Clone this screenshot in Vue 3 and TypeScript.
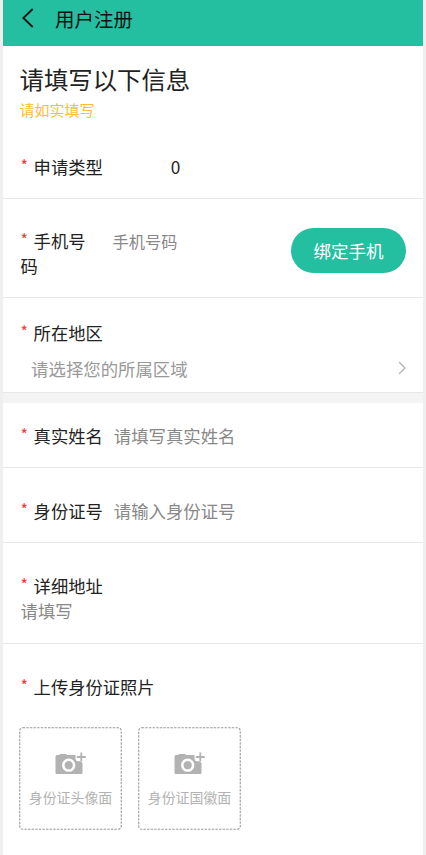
<script setup lang="ts">
interface UploadSlot {
  id: string
  caption: string
}

const uploads: UploadSlot[] = [
  { id: 'front', caption: '身份证头像面' },
  { id: 'back', caption: '身份证国徽面' },
]
</script>

<template>
  <div class="page">
    <header class="bar">
      <svg class="back" viewBox="0 0 12 20" width="12" height="20">
        <path d="M10.7 1 L1.3 10 L10.7 19" />
      </svg>
      <h1 class="bar-title">用户注册</h1>
    </header>

    <section class="intro">
      <h2 class="intro-title">请填写以下信息</h2>
      <p class="intro-tip">请如实填写</p>
    </section>

    <section class="row type">
      <div class="label"><span class="star">*</span>申请类型</div>
      <div class="type-value">0</div>
    </section>

    <section class="row phone">
      <div class="label phone-label"><span class="star">*</span>手机号码</div>
      <div class="hint phone-hint">手机号码</div>
      <button class="bind" type="button">绑定手机</button>
    </section>

    <section class="row region">
      <div class="label"><span class="star">*</span>所在地区</div>
      <div class="picker">
        <span class="hint picker-hint">请选择您的所属区域</span>
        <svg class="arrow" viewBox="0 0 8 14" width="8" height="14">
          <path d="M1 1 L7 7 L1 13" />
        </svg>
      </div>
    </section>

    <div class="gap"></div>

    <section class="row name">
      <div class="label"><span class="star">*</span>真实姓名</div>
      <div class="hint field">请填写真实姓名</div>
    </section>

    <section class="row idno">
      <div class="label"><span class="star">*</span>身份证号</div>
      <div class="hint field">请输入身份证号</div>
    </section>

    <section class="row address">
      <div class="label"><span class="star">*</span>详细地址</div>
      <div class="hint address-hint">请填写</div>
    </section>

    <section class="photos">
      <div class="label"><span class="star">*</span>上传身份证照片</div>
      <div class="slots">
        <div v-for="slot in uploads" :key="slot.id" class="slot">
          <svg class="frame" viewBox="0 0 103 103" width="103" height="103">
            <rect x="0.75" y="0.75" width="101.5" height="101.5" rx="3" />
          </svg>
          <svg class="camera" viewBox="0 0 31 23" width="31" height="23">
            <path
              class="body"
              d="M2 3 H4 L5 2 H11 L12 3 H20.5 V7 Q20.5 9 22.5 9.3 H25.5 L27.5 11 V21 Q27.5 22 26.5 22 H1.5 Q0.5 22 0.5 21 V4.5 Q0.5 3 2 3 Z"
            />
            <circle class="ring" cx="13.7" cy="13.2" r="5.4" />
            <path class="plus" d="M26.3 0.5 V9.5 M21.8 5 H30.8" />
          </svg>
          <span class="caption">{{ slot.caption }}</span>
        </div>
      </div>
    </section>
  </div>
</template>

<style>
body {
  margin: 0;
  background: #efefef;
}
</style>

<style scoped>
.page {
  box-sizing: border-box;
  width: 420px;
  height: 855px;
  margin: 0 3px;
  overflow: hidden;
  background: #fff;
  color: #222;
  font-family: "Noto Sans CJK SC", sans-serif;
  font-size: 17.3px;
  line-height: 25px;
}

.bar {
  display: flex;
  align-items: center;
  box-sizing: border-box;
  height: 46px;
  padding: 0 0 8px 19px;
  background: #24bfa1;
}

.back {
  margin-top: -2px;
}

.back path {
  fill: none;
  stroke: #111;
  stroke-width: 1.8;
}

.bar-title {
  margin: 0 0 0 21px;
  color: #111;
  font-size: 19.5px;
  font-weight: 400;
  line-height: 38px;
}

.intro {
  box-sizing: border-box;
  height: 92px;
  padding: 17px 0 0 16.5px;
}

.intro-title {
  margin: 0;
  font-size: 24.4px;
  font-weight: 400;
  line-height: 32px;
}

.intro-tip {
  margin: 5px 0 0;
  color: #f8c032;
  font-size: 15px;
  line-height: 20px;
}

.row {
  display: flex;
  box-sizing: border-box;
  padding-left: 17.6px;
  border-bottom: 1px solid #e8e8e8;
}

.label {
  flex: none;
  white-space: nowrap;
}

.star {
  display: inline-block;
  width: 13px;
  color: #fa3434;
  font-size: 16px;
  line-height: 16px;
  vertical-align: 2px;
}

.hint {
  color: #888;
  white-space: nowrap;
}

.type {
  height: 61px;
  padding-top: 16px;
}

.type-value {
  margin-left: 68px;
}

.phone {
  height: 99px;
  padding-top: 29px;
}

.phone-label {
  width: 72px;
  white-space: normal;
  word-break: break-all;
}

.phone-hint {
  margin-left: 20px;
  font-size: 16.2px;
  line-height: 27px;
}

.bind {
  width: 115px;
  height: 44.5px;
  margin: 0 17px 0 auto;
  padding: 0;
  border: 0;
  border-radius: 23px;
  background: #24bfa1;
  color: #fff;
  font-family: inherit;
  font-size: 17.5px;
  line-height: 45px;
}

.region {
  flex-direction: column;
  height: 95px;
  padding-top: 22px;
}

.picker {
  display: flex;
  align-items: center;
  justify-content: space-between;
  margin-top: 11px;
  padding: 0 17.5px 0 10.5px;
}

.picker-hint {
  color: #999;
  font-size: 17.4px;
}

.arrow {
  margin-top: -2px;
}

.arrow path {
  fill: none;
  stroke: #bbb;
  stroke-width: 1.5;
}

.gap {
  height: 10px;
  background: #f4f4f4;
}

.name {
  height: 65px;
  padding-top: 20px;
}

.field {
  margin-left: 11px;
  font-size: 17.4px;
}

.idno {
  height: 75px;
  padding-top: 30px;
}

.address {
  flex-direction: column;
  height: 101px;
  padding-top: 30px;
}

.photos {
  padding: 30px 0 0 17.6px;
}

.slots {
  display: flex;
  gap: 16px;
  margin: 28px 0 0 -1.6px;
}

.slot {
  display: grid;
  grid-template: 103px / 103px;
}

.frame,
.camera,
.caption {
  grid-area: 1 / 1;
}

.frame rect {
  fill: none;
  stroke: #999;
  stroke-width: 1.1;
  stroke-dasharray: 2.4 1.2;
}

.camera {
  margin: 25px 0 0 36px;
}

.camera .body {
  fill: #b2b2b2;
}

.camera .ring {
  fill: none;
  stroke: #fff;
  stroke-width: 2.5;
}

.camera .plus {
  fill: none;
  stroke: #b2b2b2;
  stroke-width: 1.8;
}

.caption {
  margin-top: 60px;
  color: #b2b2b2;
  font-size: 13.9px;
  line-height: 20px;
  text-align: center;
  white-space: nowrap;
}
</style>
